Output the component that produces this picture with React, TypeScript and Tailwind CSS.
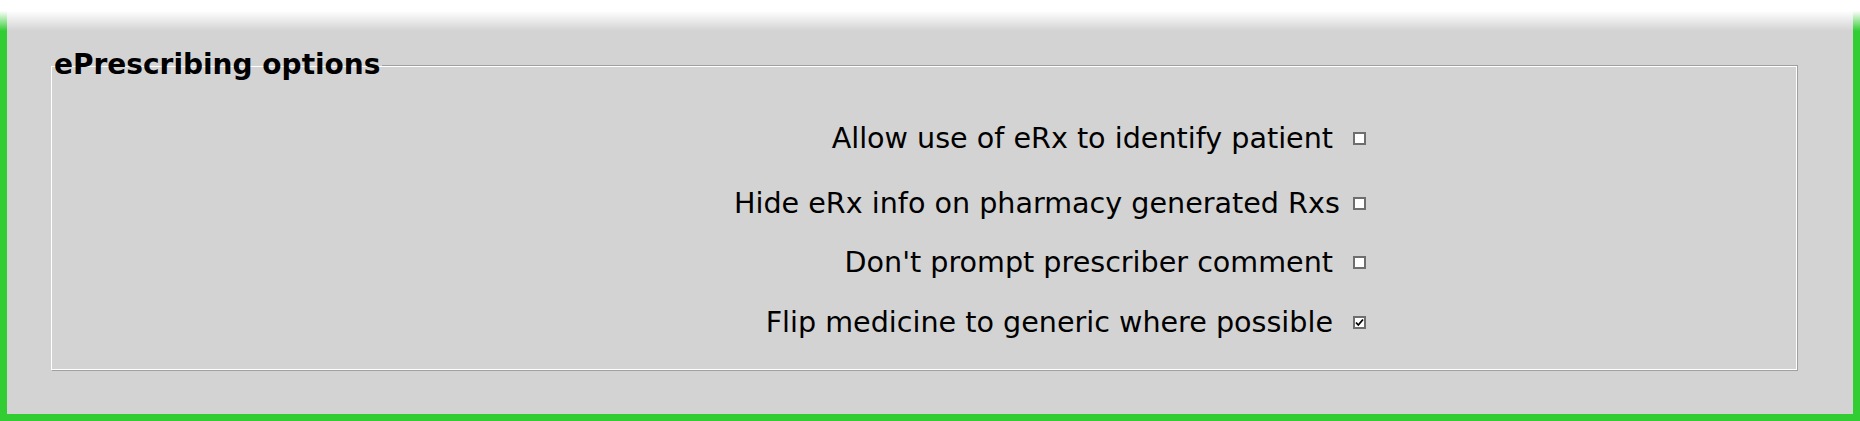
import React from "react";

type Option = { label: string; checked: boolean; mt: string };

const OPTIONS: Option[] = [
  { label: "Allow use of eRx to identify patient", checked: false, mt: "mt-[36px]" },
  { label: "Hide eRx info on pharmacy generated Rxs", checked: false, mt: "mt-[32px]" },
  { label: "Don't prompt prescriber comment", checked: false, mt: "mt-[26px]" },
  { label: "Flip medicine to generic where possible", checked: true, mt: "mt-[27px]" },
];

function Box({ checked }: { checked: boolean }) {
  return (
    <span className="ml-[20px] flex h-[13px] w-[13px] shrink-0 items-center justify-center border-2 border-[#6e6e6e] bg-white">
      {checked ? (
        <svg width="9" height="9" viewBox="0 0 9 9">
          <path d="M1 4.5 L3.3 7 L8 1.5" fill="none" stroke="#000" strokeWidth="1.8" />
        </svg>
      ) : null}
    </span>
  );
}

export default function App() {
  return (
    <div className="relative h-[421px] w-full" style={{ fontFamily: '"DejaVu Sans", Verdana, sans-serif' }}>
      <div className="h-full border-[7px] border-t-0 border-[#32cd32] bg-[#d3d3d3] pt-[7px] text-black">
        <fieldset className="ml-[44px] mr-[55px] mt-[37px] border border-[#a0a0a0] border-l-white pb-[31px] shadow-[inset_0_1px_0_#fff,inset_-1px_0_0_#fff,inset_0_-1px_0_#fff]">
          <legend className="px-[2px] text-[28px] font-bold leading-normal">ePrescribing options</legend>
          {OPTIONS.map((o) => (
            <div key={o.label} className={`${o.mt} flex items-center pl-[682px]`}>
              <span className="w-[599px] shrink-0 whitespace-nowrap text-right text-[28.6px] leading-[33px]">
                {o.label}
              </span>
              <Box checked={o.checked} />
            </div>
          ))}
        </fieldset>
      </div>
      <div className="pointer-events-none absolute inset-x-0 top-0 h-[31px] bg-linear-to-b from-white from-35% to-[#d3d3d300]" />
    </div>
  );
}
